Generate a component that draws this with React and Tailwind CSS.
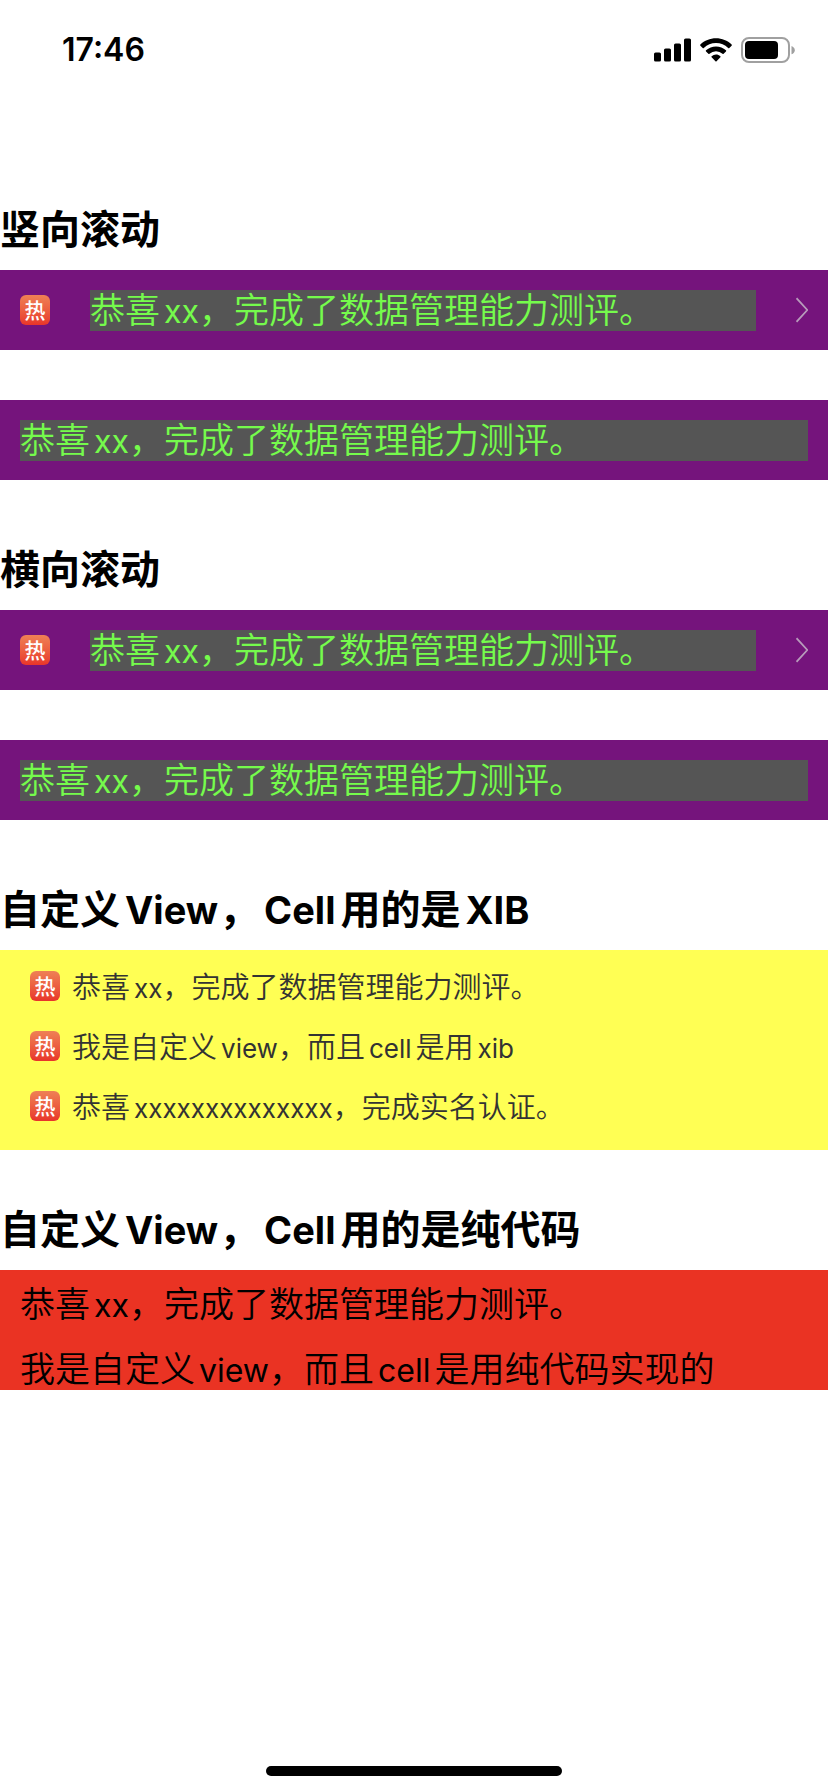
const TICKER = [{ cjk: '恭喜' }, { latin: 'xx' }, { cjk: '，完成了数据管理能力测评。' }];

const XIB_ROWS = [
  TICKER,
  [{ cjk: '我是自定义' }, { latin: 'view' }, { cjk: '，而且' }, { latin: 'cell' }, { cjk: '是用' }, { latin: 'xib' }],
  [{ cjk: '恭喜' }, { latin: 'xxxxxxxxxxxxxx' }, { cjk: '，完成实名认证。' }],
];

const CODE_ROWS = [
  TICKER,
  [{ cjk: '我是自定义' }, { latin: 'view' }, { cjk: '，而且' }, { latin: 'cell' }, { cjk: '是用纯代码实现的' }],
];

function Mixed({ parts, cjkClass = 'font-[350]', latinClass }) {
  return parts.map((part, i) => {
    if (part.cjk) {
      return (
        <span key={i} className={cjkClass}>
          {part.cjk}
        </span>
      );
    }
    const next = parts[i + 1];
    const tight = !next || next.cjk.startsWith('，');
    return (
      <span key={i} className={`${latinClass} ${tight ? 'ml-1' : 'mx-1'}`}>
        {part.latin}
      </span>
    );
  });
}

function StatusBar() {
  return (
    <header className="flex h-[100px] items-center justify-between pr-[33px] pl-[62px]">
      <time className="text-[32px] leading-10 font-semibold">17:46</time>
      <div className="flex items-center gap-[9px]">
        <svg width="37" height="24" viewBox="0 0 37 24" aria-hidden="true">
          <rect x="0" y="14.5" width="7" height="9" rx="1.6" />
          <rect x="10" y="10.5" width="7" height="13" rx="1.6" />
          <rect x="20" y="5.5" width="7" height="18" rx="1.6" />
          <rect x="30" y="0.5" width="7" height="23" rx="1.6" />
        </svg>
        <svg width="32" height="24" viewBox="0 0 32 24" aria-hidden="true">
          <path d="M16 0.3C22 0.3 27.500 2.600 31.600 6.500a.8.8 0 0 1 0 1.150L29.300 10a.8.8 0 0 1-1.120 0A17.600 17.600 0 0 0 16 5.100 17.600 17.600 0 0 0 3.820 10a.8.8 0 0 1-1.120 0L.4 7.650a.8.8 0 0 1 0-1.150C4.500 2.600 10 .3 16 .3Z" />
          <path d="M16 8.500c3.800 0 7.300 1.450 9.950 3.800a.8.8 0 0 1 .02 1.170l-2.350 2.350a.8.8 0 0 1-1.100.03A9.800 9.800 0 0 0 16 13.300a9.800 9.800 0 0 0-6.520 2.550.8.8 0 0 1-1.100-.03l-2.350-2.350a.8.8 0 0 1 .02-1.170A15 15 0 0 1 16 8.500Z" />
          <path d="M16 16.600c1.650 0 3.150.58 4.330 1.550a.8.8 0 0 1 .05 1.180l-3.820 3.850a.8.8 0 0 1-1.120 0l-3.820-3.850a.8.8 0 0 1 .05-1.180A6.800 6.800 0 0 1 16 16.600Z" />
        </svg>
        <svg width="54" height="26" viewBox="0 0 54 26" aria-hidden="true">
          <rect x="1" y="1" width="47" height="24" rx="7" fill="none" stroke="#a0a0a0" strokeWidth="2" />
          <rect x="4" y="4" width="33" height="18" rx="4" />
          <path d="M50.500 9c2 .8 3.300 2.200 3.300 4.200s-1.300 3.300-3.300 4.100Z" fill="#a0a0a0" />
        </svg>
      </div>
    </header>
  );
}

function HotBadge() {
  return (
    <span className="flex size-[30px] shrink-0 items-center justify-center rounded-md bg-linear-to-b from-[#ee8055] to-[#e8342a] text-[21px] leading-none font-medium text-white">
      热
    </span>
  );
}

function Heading({ parts }) {
  return (
    <h2 className="h-20 py-4 text-[40px] leading-[48px] whitespace-nowrap">
      <Mixed parts={parts} cjkClass="font-bold" latinClass="px-px text-[38px] font-bold" />
    </h2>
  );
}

function Ticker({ withIcons }) {
  return (
    <div className="flex h-20 items-center bg-[#75147c] px-5">
      {withIcons && <HotBadge />}
      <p
        className={`mt-px h-[41px] flex-1 bg-[#555555] text-[35px] leading-[41px] whitespace-nowrap text-[#75fb4c] ${withIcons ? 'mx-10' : ''}`}
      >
        <Mixed parts={TICKER} latinClass="text-[32px]" />
      </p>
      {withIcons && (
        <svg width="12" height="26" viewBox="0 0 12 26" fill="none" stroke="#b79cbb" strokeWidth="1.800" aria-hidden="true">
          <path d="M0.500 1.200 11.300 13 0.500 24.800" />
        </svg>
      )}
    </div>
  );
}

function TickerSection({ title }) {
  return (
    <section className="mb-[50px]">
      <Heading parts={[{ cjk: title }]} />
      <div className="flex flex-col gap-[50px]">
        <Ticker withIcons />
        <Ticker />
      </div>
    </section>
  );
}

export default function App() {
  return (
    <div className="flex min-h-screen flex-col bg-white font-['Inter','Noto_Sans_CJK_SC',sans-serif] text-black" lang="zh-CN">
      <StatusBar />
      <main className="flex-1 pt-[90px]">
        <TickerSection title="竖向滚动" />
        <TickerSection title="横向滚动" />
        <section className="mb-10">
          <Heading
            parts={[{ cjk: '自定义' }, { latin: 'View' }, { cjk: '，' }, { latin: 'Cell' }, { cjk: '用的是' }, { latin: 'XIB' }]}
          />
          <ul className="h-[200px] overflow-hidden bg-[#ffff54] pt-1.5">
            {XIB_ROWS.map((row, i) => (
              <li key={i} className="flex h-[60px] items-center gap-3 px-[30px]">
                <HotBadge />
                <p className="pt-1 text-[29px] leading-9 whitespace-nowrap text-[#333333]">
                  <Mixed parts={row} latinClass="text-[26px]" />
                </p>
              </li>
            ))}
          </ul>
        </section>
        <section>
          <Heading
            parts={[{ cjk: '自定义' }, { latin: 'View' }, { cjk: '，' }, { latin: 'Cell' }, { cjk: '用的是纯代码' }]}
          />
          <ul className="flex h-[120px] flex-col gap-6 overflow-hidden bg-[#ea3323] px-5 pt-3.5">
            {CODE_ROWS.map((row, i) => (
              <li key={i} className="h-[41px] text-[35px] leading-[41px] whitespace-nowrap">
                <Mixed parts={row} latinClass="text-[32px]" />
              </li>
            ))}
          </ul>
        </section>
      </main>
      <footer className="flex justify-center pb-4">
        <div className="h-2.5 w-[296px] rounded-full bg-black" />
      </footer>
    </div>
  );
}
